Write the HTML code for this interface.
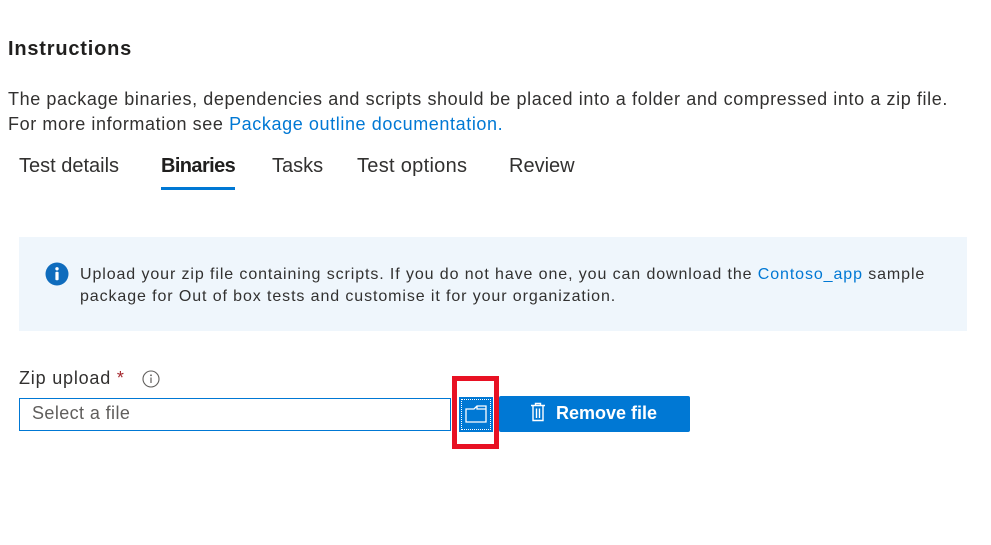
<!DOCTYPE html>
<html><head><meta charset="utf-8"><style>
html,body{margin:0;padding:0;background:#fff;width:991px;height:545px;overflow:hidden}
body{font-family:"Liberation Sans",sans-serif;color:#323130;position:relative}
.a{position:absolute;white-space:nowrap}
a{color:#0078d4;text-decoration:none}
</style></head><body>
<div class="a" style="left:8px;top:38px;font-size:20px;font-weight:bold;color:#201f1e;letter-spacing:0.8px">Instructions</div>
<div class="a" style="left:8px;top:87px;font-size:18px;line-height:25px;letter-spacing:0.6px">The package binaries, dependencies and scripts should be placed into a folder and compressed into a zip file.<br>For more information see <a>Package outline documentation.</a></div>

<div class="a" style="left:19px;top:155px;font-size:20px">Test details</div>
<div class="a" style="left:161px;top:155px;font-size:20px;font-weight:bold;color:#201f1e;letter-spacing:-0.6px">Binaries</div>
<div class="a" style="left:161px;top:187px;width:74px;height:3px;background:#0078d4"></div>
<div class="a" style="left:272px;top:155px;font-size:20px">Tasks</div>
<div class="a" style="left:357px;top:155px;font-size:20px;letter-spacing:0.3px">Test options</div>
<div class="a" style="left:509px;top:155px;font-size:20px">Review</div>

<div class="a" style="left:19px;top:237px;width:948px;height:94px;background:#eff6fc"></div>
<svg class="a" style="left:45px;top:262px" width="24" height="24" viewBox="0 0 24 24"><circle cx="12" cy="12" r="11.5" fill="#0f6cbd"/><circle cx="12" cy="6.8" r="1.7" fill="#fff"/><rect x="10.4" y="9.8" width="3.2" height="8.5" rx="1" fill="#fff"/></svg>
<div class="a" style="left:80px;top:264px;font-size:16px;line-height:22px;letter-spacing:0.9px">Upload your zip file containing scripts. If you do not have one, you can download the <a>Contoso_app</a> sample<br>package for Out of box tests and customise it for your organization.</div>

<div class="a" style="left:19px;top:368px;font-size:18px;letter-spacing:0.8px">Zip upload <span style="color:#a4262c">*</span></div>
<svg class="a" style="left:142px;top:370px" width="18" height="18" viewBox="0 0 18 18"><circle cx="9" cy="9" r="8" fill="none" stroke="#605e5c" stroke-width="1.1"/><circle cx="9" cy="5.3" r="0.9" fill="#605e5c"/><rect x="8.4" y="7.5" width="1.2" height="5.5" fill="#605e5c"/></svg>

<div class="a" style="left:19px;top:398px;width:430px;height:31px;border:1px solid #0078d4"></div>
<div class="a" style="left:32px;top:403px;font-size:18px;color:#605e5c;letter-spacing:0.4px">Select a file</div>

<div class="a" style="left:459px;top:397px;width:34px;height:35px;background:#0078d4"></div>
<div class="a" style="left:461px;top:399px;width:28px;height:29px;border:1px dotted #fff"></div>
<svg class="a" style="left:465px;top:405px" width="22" height="18" viewBox="0 0 22 18"><path d="M1 4H9L12 1H21V17H1Z M12 1V4H21" fill="none" stroke="#fff" stroke-width="1.3"/></svg>

<div class="a" style="left:452px;top:376px;width:37px;height:63px;border:5px solid #e81123"></div>

<div class="a" style="left:499px;top:396px;width:191px;height:36px;background:#0078d4;border-radius:2px"></div>
<svg class="a" style="left:530px;top:402px" width="16" height="20" viewBox="0 0 16 20"><path d="M1 3.5H15M5.5 3.5V1.5H10.5V3.5M3 3.5V18.5H13V3.5M6.5 6.5V16M9.5 6.5V16" fill="none" stroke="#fff" stroke-width="1.4"/></svg>
<div class="a" style="left:556px;top:403px;font-size:18px;font-weight:bold;color:#fff">Remove file</div>
</body></html>
